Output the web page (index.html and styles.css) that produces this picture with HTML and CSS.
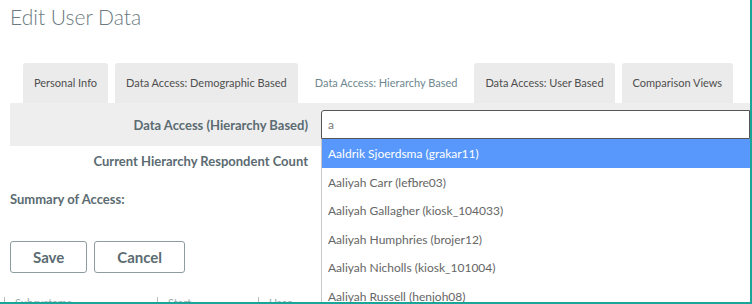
FILE: index.html
```html
<!DOCTYPE html>
<html lang="en">

<head>
  <meta charset="UTF-8">
  <title>Edit User Data</title>
  <link rel="stylesheet" href="styles.css">
</head>

<body>
  <div class="frame">
    <h1 class="title">Edit User Data</h1>

    <ul class="tabs">
      <li><a href="#">Personal Info</a></li>
      <li><a href="#">Data Access: Demographic Based</a></li>
      <li><a href="#" class="active">Data Access: Hierarchy Based</a></li>
      <li><a href="#">Data Access: User Based</a></li>
      <li><a href="#">Comparison Views</a></li>
    </ul>

    <div class="form">
      <div class="row band">
        <label class="label">Data Access (Hierarchy Based)</label>
        <div class="field">
          <div class="select-input">a</div>
          <ul class="dropdown">
            <li class="hover">Aaldrik Sjoerdsma (grakar11)</li>
            <li>Aaliyah Carr (lefbre03)</li>
            <li>Aaliyah Gallagher (kiosk_104033)</li>
            <li>Aaliyah Humphries (brojer12)</li>
            <li>Aaliyah Nicholls (kiosk_101004)</li>
            <li>Aaliyah Russell (henjoh08)</li>
          </ul>
        </div>
      </div>
      <div class="row count">
        <label class="label">Current Hierarchy Respondent Count</label>
      </div>
      <div class="summary">Summary of Access:</div>
      <div class="buttons">
        <button class="btn">Save</button>
        <button class="btn">Cancel</button>
      </div>
      <div class="table-peek">
        <span class="c1">Subsystems</span>
        <span class="c2">Start</span>
        <span class="c3">User</span>
      </div>
    </div>
  </div>
</body>

</html>
```

FILE: styles.css
```css
* {
  padding: 0;
  margin: 0;
  box-sizing: border-box;
}

body {
  font-family: Lato, "Open Sans", sans-serif;
  color: #5b6b72;
  background: #fff;
  overflow: hidden;
}

.frame {
  width: 752px;
  height: 304px;
  border-right: 2px solid #1aa59a;
  border-bottom: 2px solid #1aa59a;
  padding-left: 10px;
  overflow: hidden;
}

.title {
  font-size: 21px;
  font-weight: 300;
  color: #6a7a80;
  padding-top: 4px;
  height: 63px;
  line-height: 26px;
}

.tabs {
  display: flex;
  gap: 7px;
  padding-left: 13px;
  list-style: none;
  height: 40px;
}

.tabs a {
  display: block;
  height: 40px;
  line-height: 40px;
  padding: 0 11px;
  font-size: 11px;
  color: #4e4e4e;
  text-decoration: none;
  background: #ebebeb;
  border-radius: 3px 3px 0 0;
}

.tabs a.active {
  background: #fff;
  color: #6e8790;
  padding: 0 10px;
}

.row {
  display: flex;
  align-items: center;
  height: 43px;
}

.band {
  background: #eeeeee;
}

.row.count {
  height: 30px;
}

.label {
  width: 311px;
  padding-right: 13px;
  text-align: right;
  font-size: 13px;
  font-weight: 700;
  color: #5b6b72;
}

.field {
  position: relative;
  width: 429px;
}

.select-input {
  height: 29px;
  line-height: 27px;
  border: 1px solid #555;
  border-radius: 3px 0 0 0;
  background: #fff;
  padding-left: 6px;
  font-size: 12px;
  color: #777;
}

.dropdown {
  position: absolute;
  left: 0;
  top: 29px;
  width: 429px;
  list-style: none;
  background: #fff;
  border-left: 1px solid #c8c8c8;
  z-index: 2;
}

.dropdown li {
  height: 28.5px;
  line-height: 29.5px;
  padding-left: 6px;
  font-size: 12px;
  color: #666;
}

.dropdown li.hover {
  background: #5897fb;
  color: #fff;
}

.summary {
  height: 46px;
  padding-top: 15px;
  font-size: 13px;
  font-weight: 700;
  color: #5b6b72;
}

.buttons {
  display: flex;
  gap: 7px;
  padding-top: 19px;
}

.btn {
  height: 32px;
  background: #fff;
  border: 1px solid #8d9ca1;
  border-radius: 3px;
  font-family: Lato, "Open Sans", sans-serif;
  font-size: 15px;
  font-weight: 700;
  color: #5b6b72;
  padding: 0 22px;
}

.table-peek {
  display: flex;
  margin: 24px 0 0 -6px;
  height: 12px;
  font-size: 11px;
  color: #9aa;
  line-height: 12px;
}

.table-peek span {
  border-left: 1px solid #bbb;
  padding-left: 10px;
}

.table-peek .c1 {
  width: 153px;
}

.table-peek .c2 {
  width: 101px;
}
```
